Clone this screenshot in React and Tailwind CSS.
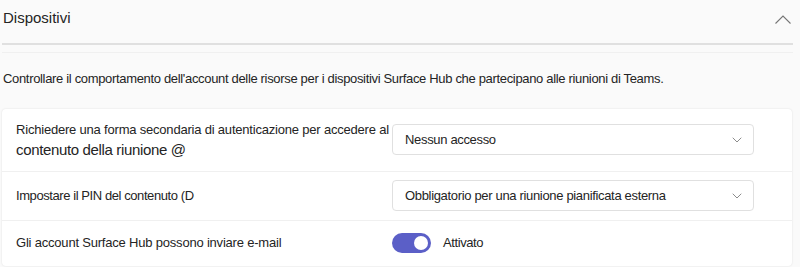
import { ChevronDown } from "lucide-react"

function Select({ value }) {
  return (
    <div className="flex h-[31px] w-[362px] items-center justify-between rounded-[4px] border border-[#e0e0e0] bg-white pl-[12px] pr-[8px]">
      <span className="text-[13px] tracking-[-0.33px] text-[#242424]">{value}</span>
      <ChevronDown size={16} strokeWidth={1.1} className="text-[#616161]" />
    </div>
  )
}

function App() {
  return (
    <div
      className="h-[267px] w-[800px] overflow-hidden bg-[#fafafa] text-[#242424]"
      style={{ fontFamily: '"Liberation Sans", Arial, sans-serif' }}
    >
      {/* header */}
      <div className="flex h-[43px] items-start justify-between pl-[3px] pr-[9px] pt-[7px]">
        <span className="text-[15px]">Dispositivi</span>
        <svg width="16" height="9" viewBox="0 0 16 9" className="mt-[8px] text-[#757575]">
          <polyline points="0.5,8.5 8,1 15.5,8.5" fill="none" stroke="currentColor" strokeWidth="1.1" />
        </svg>
      </div>
      <div className="mx-[2px] h-[2px] w-[791px] bg-[#e0e0e0]" />
      <div className="mx-[2px] mt-[7px] h-px w-[791px] bg-[#f0f0f0]" />

      <p className="pl-[3px] pt-[16px] text-[13px] tracking-[-0.33px]">
        Controllare il comportamento dell'account delle risorse per i dispositivi Surface Hub che partecipano alle riunioni di Teams.
      </p>

      {/* card */}
      <div className="ml-[2px] mt-[20px] w-[790px] rounded-[4px] bg-white shadow-[0_0_2px_rgba(0,0,0,0.12)]">
        <div className="flex h-[63px] items-center border-b border-[#f0f0f0] pl-[14px]">
          <div className="w-[376px] leading-[20px]">
            <div className="whitespace-nowrap text-[13px] tracking-[-0.2px]">
              Richiedere una forma secondaria di autenticazione per accedere al
            </div>
            <div className="text-[15px] tracking-[-0.35px]">contenuto della riunione @</div>
          </div>
          <Select value="Nessun accesso" />
        </div>

        <div className="flex h-[49px] items-center border-b border-[#f0f0f0] pl-[14px]">
          <div className="w-[376px] text-[13px] tracking-[-0.42px]">Impostare il PIN del contenuto (D</div>
          <Select value="Obbligatorio per una riunione pianificata esterna" />
        </div>

        <div className="flex h-[45px] items-center pl-[14px]">
          <div className="w-[376px] text-[13px] tracking-[-0.2px]">Gli account Surface Hub possono inviare e-mail</div>
          <div className="flex items-center gap-[12px]">
            <div className="flex h-[20px] w-[39px] items-center justify-end rounded-full bg-[#5b5fc7] pr-[3px]">
              <div className="h-[14px] w-[14px] rounded-full bg-white" />
            </div>
            <span className="text-[13px] tracking-[-0.4px]">Attivato</span>
          </div>
        </div>
      </div>
    </div>
  )
}

export default App
